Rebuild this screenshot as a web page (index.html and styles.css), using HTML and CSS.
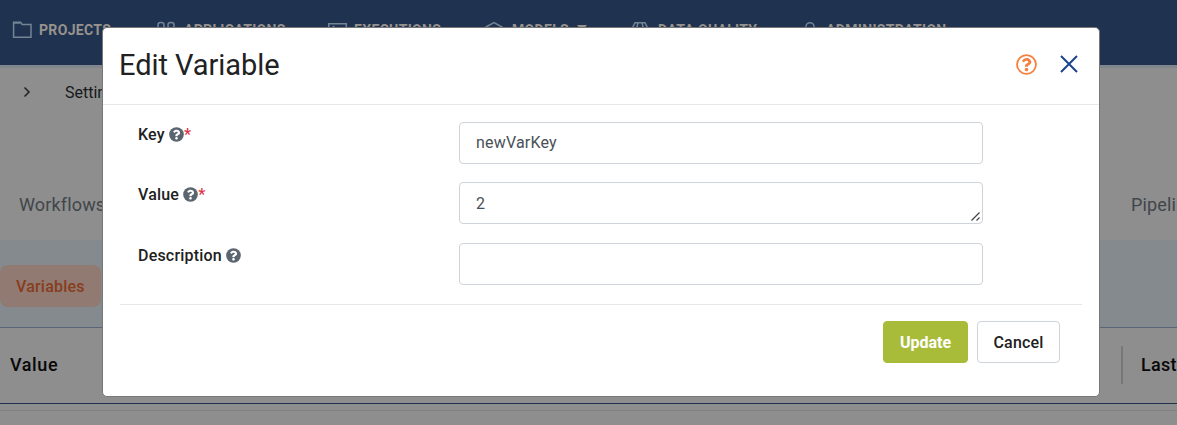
FILE: index.html
```html
<!DOCTYPE html>
<html lang="en">
<head>
<meta charset="utf-8">
<title>Edit Variable</title>
<link rel="stylesheet" href="styles.css">
</head>
<body>
<svg width="0" height="0" class="defs">
  <symbol id="glyph" viewBox="0 0 512 512"><path d="M262.655 90c-54.497 0-89.255 22.957-116.549 63.758-3.536 5.286-2.353 12.415 2.715 16.258l34.699 26.310c5.205 3.947 12.621 3.008 16.665-2.122 17.864-22.658 30.113-35.797 57.303-35.797 20.429 0 45.698 13.148 45.698 32.958 0 14.976-12.363 22.667-32.534 33.976C247.128 238.528 216 254.941 216 296v4c0 6.627 5.373 12 12 12h56c6.627 0 12-5.373 12-12v-1.333c0-28.462 83.186-29.647 83.186-106.667 0-58.002-60.165-102-116.531-102zM256 338c-25.365 0-46 20.635-46 46 0 25.364 20.635 46 46 46s46-20.636 46-46c0-25.365-20.635-46-46-46z"/></symbol>
  <symbol id="help" viewBox="0 0 512 512"><circle cx="256" cy="256" r="250" fill="#5b6570"/><use href="#glyph" fill="#fff" width="512" height="512"/></symbol>
</svg>
<div class="page">
  <nav class="nav">
    <a class="item"><svg class="ico" viewBox="0 0 20 20"><path d="M1.600 17.300V2.200h7l1.500 2.300H19v12.800z"/><path d="M2 3h6.500"/></svg>PROJECTS</a>
    <a class="item"><svg class="ico" viewBox="0 0 20 20"><rect x="1" y="2.500" width="6" height="6" rx="2.500"/><rect x="11" y="2.500" width="6" height="6" rx="2.500"/><rect x="1" y="12" width="6" height="6" rx="2.500"/><rect x="11" y="12" width="6" height="6" rx="2.500"/></svg>APPLICATIONS</a>
    <a class="item"><svg class="ico" viewBox="0 0 20 20"><path d="M1.700 3.700h17.600v14H1.700zM6 6l4 4-4 4"/></svg>EXECUTIONS</a>
    <a class="item"><svg class="ico" viewBox="0 0 20 20"><path d="M1 7l8-4.400L17 7v8l-8 4-8-4zM1 7l8 4 8-4M9 11v8"/></svg>MODELS<span class="caret"></span></a>
    <a class="item"><svg class="ico" viewBox="0 0 20 20"><path d="M4 2.700h10l3 6-8 10-8-10zM1 8.700h16M7 2.700L5.500 8.700 9 18l3.500-9.300L11 2.700"/></svg>DATA QUALITY</a>
    <a class="item admin"><svg class="ico" viewBox="0 0 20 20"><circle cx="7" cy="6.700" r="4"/><path d="M1 19c0-9 12-9 12 0"/></svg>ADMINISTRATION</a>
  </nav>
  <div class="crumbs"><svg class="chev" viewBox="0 0 8 12"><path d="M1.500 1.500L6 6l-4.500 4.500"/></svg>Settings</div>
  <div class="tabs"><span>Workflows</span><span class="pipe">Pipelines</span></div>
  <div class="band"><span class="pill">Variables</span></div>
  <div class="thead"><span>Value</span><span class="last">Last</span></div>
  <div class="tail"></div>
</div>
<div class="modal">
  <header class="head">
    <h1>Edit Variable</h1>
    <svg class="round" viewBox="0 0 20 20"><circle cx="10" cy="10" r="9" fill="none" stroke="#f5803e" stroke-width="1.700"/><use href="#glyph" x="0.500" y="0.500" width="19" height="19" fill="#f5803e"/></svg>
    <svg class="close" viewBox="0 0 18 18"><path d="M1 1l16 16M17 1L1 17"/></svg>
  </header>
  <form class="form">
    <div class="row"><label>Key <svg class="q"><use href="#help"/></svg><b>*</b></label><div class="field">newVarKey</div></div>
    <div class="row second"><label>Value <svg class="q"><use href="#help"/></svg><b>*</b></label><div class="field area">2<svg class="grip" viewBox="0 0 9 9"><path d="M.5 8.500l8-8M5.500 8.500l3-3"/></svg></div></div>
    <div class="row"><label>Description <svg class="q"><use href="#help"/></svg></label><div class="field"></div></div>
  </form>
  <footer class="foot"><span class="btn primary">Update</span><span class="btn">Cancel</span></footer>
</div>
</body>
</html>
```
FILE: styles.css
```css
* { box-sizing: border-box; }
body { margin: 0; width: 1177px; height: 425px; overflow: hidden; background: #8e8e8e; font: 16px/24px Roboto, sans-serif; color: #212121; }
.defs { position: absolute; }
.page { height: 425px; overflow: hidden; }
.nav { height: 65px; padding: 0 0 5px 12px; background: #1f3351; display: grid; grid-template-columns: 145px 170px 158px 146px 172px auto; align-items: center; }
.item { display: flex; align-items: center; font-size: 14px; font-weight: 700; letter-spacing: .33px; color: #98928d; white-space: nowrap; }
.ico { width: 20px; height: 20px; margin-right: 7px; fill: none; stroke: #748494; stroke-width: 1.500; overflow: visible; }
.admin .ico { margin-right: 3px; }
.caret { margin: -5px 0 0 8px; border: 5px solid transparent; border-top: 6px solid #98928d; border-bottom: 0; }
.crumbs { height: 107px; border-top: 3px solid #80868b; padding: 13px 0 0 23px; display: flex; gap: 34px; color: #16181a; }
.chev { width: 8px; height: 12px; margin-top: 5px; fill: none; stroke: #222; stroke-width: 1.500; }
.tabs { height: 68px; padding: 21px 0 0 19px; display: flex; font-size: 18px; letter-spacing: .15px; color: #41464b; white-space: nowrap; }
.tabs span { width: 1112px; flex: none; }
.band { height: 88px; padding-top: 25px; background: #848a8d; border-bottom: 1px solid #586575; }
.pill { display: block; width: 101px; height: 42px; padding-left: 16px; border-radius: 8px; background: #907a71; color: #883d1d; font-weight: 500; letter-spacing: .2px; line-height: 43px; }
.thead { height: 76px; padding: 0 0 2px 10px; display: flex; align-items: center; border-bottom: 1px solid #23324c; font-size: 18px; font-weight: 500; letter-spacing: .6px; color: #080808; }
.thead span { width: 1111px; flex: none; }
.thead .last { height: 38px; padding-left: 18px; border-left: 2px solid #777; line-height: 38px; letter-spacing: .3px; }
.tail { height: 7px; border-bottom: 1px solid #7f8284; }
.modal { position: absolute; left: 102px; top: 27px; width: 998px; height: 370px; background: #fff; border: 1px solid #777; border-radius: 5px; }
.head { height: 77px; padding: 0 21px 4px 16px; display: flex; align-items: center; border-bottom: 1px solid #e5e7e9; }
h1 { margin: 0 auto 0 0; padding-top: 1px; font-size: 29px; font-weight: 400; line-height: 36px; letter-spacing: -.05px; }
.round { width: 21px; height: 21px; margin-right: 23px; }
.close { width: 18px; height: 18px; fill: none; stroke: #1d4289; stroke-width: 2; }
.form { margin: 0 17px; padding: 17px 18px 0; height: 200px; border-bottom: 1px solid #e5e7e9; }
.row { display: flex; align-items: flex-start; height: 60px; }
.row.second { height: 61px; }
label { width: 321px; padding-top: 1px; font-weight: 500; letter-spacing: .2px; }
.q { width: 15px; height: 15px; vertical-align: -2px; }
b { color: #dc3545; font-weight: 500; }
.field { width: 524px; height: 42px; padding: 0 16px; border: 1px solid #ced4da; border-radius: 4px; color: #495057; line-height: 40px; letter-spacing: .2px; }
.area { display: flex; line-height: 42px; }
.grip { width: 9px; height: 9px; margin: 29px -14px 0 auto; fill: none; stroke: #444; stroke-width: 1.200; }
.foot { padding: 16px 39px 0 0; display: flex; justify-content: flex-end; gap: 9px; }
.btn { width: 83px; height: 42px; border: 1px solid #ced4da; border-radius: 4px; font-weight: 500; line-height: 42px; letter-spacing: .2px; text-align: center; }
.primary { width: 85px; background: #a9bc39; border-color: #a9bc39; color: #fff; font-weight: 700; letter-spacing: 0; }
```
